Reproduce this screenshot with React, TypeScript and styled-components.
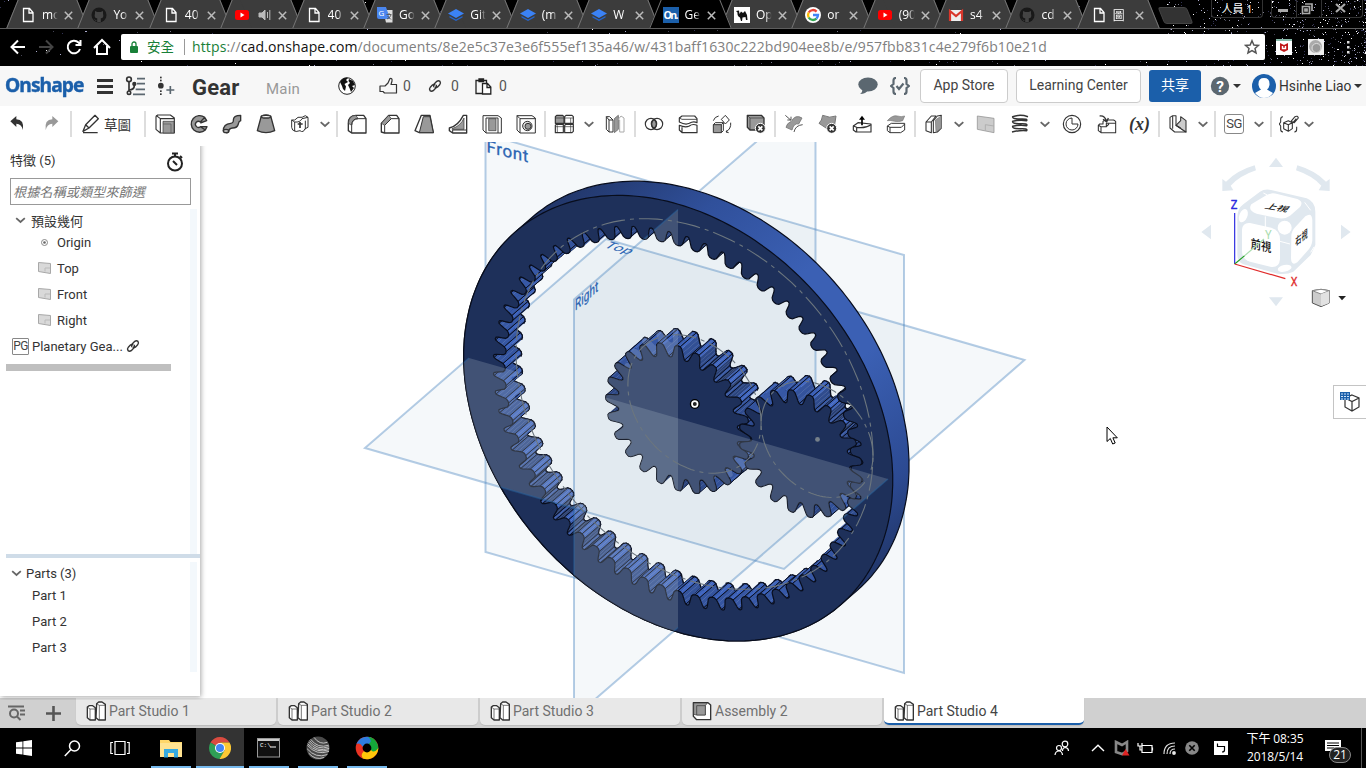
import React from "react";
import styled, { createGlobalStyle, css } from "styled-components";

const ui = `Roboto, "Noto Sans CJK TC", sans-serif`;
const sys = `"Open Sans", "Noto Sans CJK TC", sans-serif`;

const Global = createGlobalStyle`
  * { box-sizing: border-box; }
  body { margin: 0; background: #fff; overflow: hidden; font-family: ${ui}; }
  svg { display: block; flex: none; }
`;

const Screen = styled.div`
  width: 1366px;
  height: 768px;
  display: flex;
  flex-direction: column;
  overflow: hidden;
`;

/* ---------- browser chrome ---------- */

const Browser = styled.div`
  position: relative;
  height: 66px;
  flex: none;
  background: #000;
  color: #fff;
  font-family: ${sys};
  overflow: hidden;
`;
const StarLayer = styled.svg`
  position: absolute;
  inset: 0;
`;
const TabStrip = styled.div`
  position: relative;
  height: 29px;
  display: flex;
  padding-left: 12px;
  border-bottom: 1px solid #5d5d5d;
`;
const tabSide = css`
  content: "";
  position: absolute;
  top: 0;
  height: 28px;
  z-index: -1;
`;
const BrowserTab = styled.div<{ $active?: boolean }>`
  position: relative;
  z-index: ${(p) => (p.$active ? 2 : 1)};
  width: 71.4px;
  height: 28px;
  flex: none;
  display: flex;
  align-items: center;
  padding: 2px 0 0 8px;
  isolation: isolate;
  &::before {
    ${tabSide}
    left: 0;
    right: 30px;
    background: ${(p) => (p.$active ? "#000" : "#3c3c3c")};
    border-left: 1px solid #777;
    transform: skewX(-22deg);
  }
  &::after {
    ${tabSide}
    left: 20px;
    right: 0;
    background: ${(p) => (p.$active ? "#000" : "#3c3c3c")};
    border-right: 1px solid #777;
    transform: skewX(22deg);
  }
`;
const Fav = styled.div`
  width: 17px;
  height: 16px;
  flex: none;
`;
const TabTitle = styled.div`
  width: 21px;
  margin: 0 0 0 5px;
  padding-bottom: 1px;
  font-size: 12px;
  white-space: nowrap;
  overflow: hidden;
  -webkit-mask-image: linear-gradient(90deg, #000 45%, transparent 75%);
  mask-image: linear-gradient(90deg, #000 45%, transparent 75%);
`;
const NewTab = styled.div`
  width: 29px;
  height: 17px;
  margin: 7px 0 0 7px;
  border: 1px solid #444;
  border-radius: 3px;
  background: #333;
  transform: skewX(22deg);
`;
const WindowControls = styled.div`
  position: absolute;
  top: 0;
  right: 3px;
  display: flex;
  gap: 8px;
`;
const Profile = styled.div`
  width: 52px;
  height: 18px;
  border: 1px solid #333;
  border-top: 0;
  border-radius: 0 0 4px 4px;
  text-align: center;
  font-size: 11px;
  line-height: 18px;
`;
const WinButtons = styled.div`
  display: flex;
  height: 18px;
  border: 1px solid #333;
  border-top: 0;
  border-radius: 0 0 4px 4px;
  width: 92px;
`;
const AddressRow = styled.div`
  position: relative;
  height: 36px;
  display: flex;
  align-items: center;
`;
const NavIcons = styled.div`
  width: 121px;
  display: flex;
  gap: 10px;
  padding-left: 9px;
`;
const Omnibox = styled.div`
  width: 1144px;
  height: 26px;
  border-radius: 2px;
  background: #fff;
  display: flex;
  align-items: center;
  padding: 0 5px 0 8px;
  font-size: 14px;
  color: #808080;
`;
const Secure = styled.div`
  width: 37px;
  margin-left: 8px;
  color: #188038;
  font-size: 13.5px;
  line-height: 20px;
  white-space: nowrap;
`;
const Bar = styled.div`
  width: 1px;
  height: 16px;
  background: #999;
  margin: 0 7px 0 0;
`;
const Url = styled.div`
  flex: 1;
  font-size: 14px;
  letter-spacing: 0.125px;
  padding-bottom: 2px;
  white-space: nowrap;
  i { font-style: normal; color: #188038; }
  b { font-weight: 400; color: #111; }
`;
const Extensions = styled.div`
  display: flex;
  gap: 16px;
  padding-left: 11px;
  align-items: center;
`;

/* ---------- document header ---------- */

const DocHeader = styled.div`
  height: 40px;
  flex: none;
  background: #f7f7f7;
  display: flex;
  align-items: center;
  color: #333;
  font-size: 14px;
`;
const Brand = styled.div`
  width: 91px;
  padding: 0 0 3px 5px;
  font: 700 20px/24px "Noto Sans", sans-serif;
  letter-spacing: -1px;
  color: #1b5faa;
  -webkit-text-stroke: 0.4px #1b5faa;
  span { display: inline-block; transform: scaleX(0.965); transform-origin: 0 50%; }
`;
const HeaderSlot = styled.div<{ $w: number }>`
  width: ${(p) => p.$w}px;
  flex: none;
  display: flex;
  align-items: center;
  justify-content: center;
`;
const DocName = styled.div`
  width: 68px;
  margin-left: 9px;
  font-size: 22px;
  padding-top: 2px;
  font-weight: 700;
  letter-spacing: 0.2px;
`;
const Branch = styled.div`
  width: 66px;
  margin-left: 6px;
  padding-top: 6px;
  font-size: 15px;
  color: #999;
  letter-spacing: 0.2px;
`;
const Counter = styled.div<{ $w: number; $gap?: number }>`
  width: ${(p) => p.$w}px;
  display: flex;
  align-items: center;
  gap: ${(p) => p.$gap ?? 6}px;
  color: #555;
`;
const OutlineButton = styled.div<{ $w: number }>`
  width: ${(p) => p.$w}px;
  height: 34px;
  margin-right: 8px;
  border: 1px solid #ccc;
  border-radius: 4px;
  background: #fff;
  text-align: center;
  line-height: 31px;
  color: #444;
`;
const ShareButton = styled.div`
  width: 52px;
  height: 32px;
  margin: 0 9px 0 0;
  border-radius: 3px;
  background: #1b5faa;
  color: #fff;
  text-align: center;
  line-height: 31px;
`;
const Caret = styled.div`
  border: 4px solid transparent;
  border-top-color: #333;
  border-bottom: 0;
`;
const User = styled.div`
  display: flex;
  align-items: center;
  gap: 3px;
  margin-left: 8px;
  font-size: 13.8px;
  white-space: nowrap;
`;

/* ---------- tool bar ---------- */

const ToolBar = styled.div`
  height: 36px;
  flex: none;
  background: #fff;
  display: flex;
  align-items: center;
`;
const ToolCell = styled.div<{ $w: number }>`
  width: ${(p) => p.$w}px;
  height: 26px;
  flex: none;
  display: flex;
  align-items: center;
  justify-content: center;
  color: #333;
`;
const Rule = styled.div`
  width: 2px;
  height: 26px;
  background: #ddd;
`;
const SketchLabel = styled.span`
  margin: 0 4px 0 3px;
  font-size: 13.5px;
`;
const BoxedLetters = styled.div<{ $small?: boolean }>`
  width: ${(p) => (p.$small ? 17 : 20)}px;
  height: ${(p) => (p.$small ? 17 : 20)}px;
  border: 1px solid #888;
  border-radius: ${(p) => (p.$small ? 1 : 3)}px;
  font-size: ${(p) => (p.$small ? 12 : 13)}px;
  line-height: ${(p) => (p.$small ? 15 : 18)}px;
  text-align: center;
  color: #444;
  letter-spacing: -0.5px;
`;
const Variable = styled.div`
  font: italic 700 18px/20px "Liberation Serif", serif;
`;

/* ---------- work area ---------- */

const Work = styled.div`
  height: 556px;
  flex: none;
  display: flex;
  position: relative;
`;
const Side = styled.div`
  width: 200px;
  height: 554px;
  flex: none;
  background: #fff;
  box-shadow: 1px 1px 5px rgba(0, 0, 0, 0.35);
  clip-path: inset(4px -8px -4px 0);
  z-index: 1;
  display: flex;
  flex-direction: column;
  font-size: 13px;
  color: #333;
`;
const SideTitle = styled.div`
  height: 36px;
  display: flex;
  justify-content: space-between;
  align-items: center;
  padding: 4px 16px 0 10px;
  span { margin-bottom: 6px; }
`;
const Filter = styled.div`
  width: 181px;
  height: 27px;
  margin-left: 10px;
  border: 1px solid #999;
  font-size: 13.2px;
  line-height: 27px;
  font-style: italic;
  color: #777;
  padding-left: 2px;
`;
const ScrollPane = styled.div<{ $h: number; $mt: number }>`
  height: ${(p) => p.$h}px;
  margin-top: ${(p) => p.$mt}px;
  width: 197px;
  border-right: 7px solid #f3f8fc;
`;
const Row = styled.div<{ $pad: number; $h: number; $gap?: number; $after?: number }>`
  height: ${(p) => p.$h}px;
  margin-bottom: ${(p) => p.$after ?? 0}px;
  display: flex;
  align-items: center;
  gap: ${(p) => p.$gap ?? 6}px;
  padding-left: ${(p) => p.$pad}px;
  white-space: nowrap;
`;
const Rollback = styled.div`
  width: 165px;
  height: 7px;
  margin: 5px 0 0 6px;
  background: #bfbfbf;
`;
const Divider = styled.div`
  height: 4px;
  margin-left: 6px;
  background: #cfdce8;
`;
const Canvas = styled.div`
  position: relative;
  flex: 1;
`;
const CubeOverlay = styled.svg`
  position: absolute;
  top: 3px;
  right: 0;
`;
const TableButton = styled.div`
  position: absolute;
  right: 0;
  top: 243px;
  width: 33px;
  height: 34px;
  border: 1px solid #c4c4c4;
  border-right: 0;
  background: #fff;
  padding: 5px 0 0 5px;
`;
const Pointer = styled.svg`
  position: absolute;
  left: 906px;
  top: 284px;
`;

/* ---------- bottom tabs and task bar ---------- */

const DocTabs = styled.div`
  height: 30px;
  flex: none;
  background: #d0d0d0;
  display: flex;
`;
const DocTab = styled.div<{ $active?: boolean }>`
  width: 200px;
  height: 27px;
  margin-right: 2px;
  flex: none;
  border-radius: 0 0 5px 5px;
  background: ${(p) => (p.$active ? "#fff" : "#e8e8e8")};
  color: ${(p) => (p.$active ? "#444" : "#707070")};
  border-bottom: ${(p) => (p.$active ? "2px solid #1b5faa" : "0")};
  box-shadow: 0 1px 1px #bbb;
  display: flex;
  padding: 3px 0 0 10px;
  gap: 3px;
  font-size: 14px;
  line-height: 21px;
`;
const TaskBar = styled.div`
  height: 40px;
  flex: none;
  background: #000;
  display: flex;
  color: #fff;
  font-family: ${sys};
`;
const TaskCell = styled.div<{ $w: number; $open?: boolean; $hot?: boolean }>`
  width: ${(p) => p.$w}px;
  height: 40px;
  flex: none;
  display: flex;
  align-items: center;
  justify-content: center;
  background: ${(p) => (p.$hot ? "#333" : "none")};
  position: relative;
  &::after {
    content: "";
    position: absolute;
    bottom: 0;
    left: ${(p) => (p.$hot ? 0 : 5)}px;
    width: ${(p) => (p.$hot ? 48 : 40)}px;
    height: 2px;
    background: ${(p) => (p.$open ? "#76b9ed" : "none")};
  }
`;
const Spring = styled.div`
  flex: 1;
`;
const Clock = styled.div`
  width: 74px;
  font-size: 12px;
  line-height: 18px;
  padding-top: 2px;
  text-align: center;
  letter-spacing: -0.1px;
  white-space: nowrap;
`;
const Notice = styled.div`
  position: relative;
  width: 50px;
  height: 40px;
  border-right: 1px solid #555;
  margin-right: 4px;
  padding: 12px 0 0 13px;
`;
const Badge = styled.div`
  position: absolute;
  left: 17px;
  top: 19px;
  width: 22px;
  height: 16px;
  border: 1px solid #888;
  border-radius: 8px;
  background: #222;
  font-size: 12px;
  line-height: 14px;
  text-align: center;
`;

/* ---------- small drawings ---------- */

function seeded(seed: number) {
  let s = seed;
  return () => {
    s = (s * 16807) % 2147483647;
    return s / 2147483647;
  };
}
const rnd = seeded(77);
const stars = Array.from({ length: 900 }, () => {
  const dense = rnd() > 0.45;
  return {
    x: Math.floor(dense ? 1366 - Math.pow(rnd(), 1.5) * 200 : rnd() * 1366),
    y: Math.floor(rnd() * 66),
    c: ["#445", "#778", "#aac", "#fff", "#335"][Math.floor(rnd() * 5)],
  };
});

function Stars() {
  return (
    <StarLayer width={1366} height={66} shapeRendering="crispEdges">
      {stars.map((s, i) => (
        <rect key={i} x={s.x} y={s.y} width={1} height={1} fill={s.c} />
      ))}
    </StarLayer>
  );
}

const favs: Record<string, React.ReactNode> = {
  doc: <path d="M3.5 1.5H9.5L13 5.5V14.5H3.5ZM9 2V6H13" fill="none" stroke="#fff" strokeWidth="1.3" />,
  git: (
    <g>
      <circle cx="8" cy="8" r="7.5" fill="#191919" />
      <path d="M4 4L6.3 5H9.7L12 4V6.5Q13.3 11 9.8 11.3V15H6.2V11.3Q2.7 11 4 6.5ZM6 14Q4 14.5 3 12" fill="#444" />
    </g>
  ),
  yt: (
    <g>
      <rect x="1" y="3" width="14" height="10" rx="2.5" fill="#f00" />
      <path d="M6.5 5.5L10.5 8L6.5 10.5Z" fill="#fff" />
    </g>
  ),
  tr: (
    <g>
      <path d="M6 3H15.5V15.5H9Z" fill="#ddd" />
      <path d="M0 0H9L13 12H2Q0 12 0 10Z" fill="#4a86ee" />
      <text x="1.5" y="9" fontSize="8" fill="#fff">G</text>
      <path d="M9.5 7.5H14.5M12 6V8M10 12Q13 11 14 8M10.5 9L14 12.5" stroke="#555" fill="none" strokeWidth=".9" />
    </g>
  ),
  box: (
    <g>
      <path d="M0 6.5L8 2L16 6.5L8 11Z" fill="#3b82f6" />
      <path d="M1.5 9L8 12.4L14.5 9V10.5L8 14L1.5 10.5Z" fill="#2563c9" />
    </g>
  ),
  on: (
    <g>
      <rect width="16" height="16" fill="#1b5faa" />
      <text x="0.5" y="12" fontSize="10.5" fontWeight="700" fill="#fff" textLength="15">On.</text>
    </g>
  ),
  camel: (
    <g>
      <rect width="16" height="16" fill="#fff" />
      <path d="M2 4L5 3.5L5.5 7L7 4.5L9 6L11 4L13 8L13.5 13H12L11.5 10L8.5 10.5L8 14H7L6 10.5Q3 9 3.5 5.5Z" fill="#111" />
    </g>
  ),
  goo: (
    <g fill="none" strokeWidth="2.4">
      <circle cx="8" cy="8" r="8" fill="#fff" stroke="none" />
      <path d="M11.6 4.6A5 5 0 0 0 3.7 5.5" stroke="#ea4335" />
      <path d="M3.7 5.5A5 5 0 0 0 3.7 10.5" stroke="#fbbc05" />
      <path d="M3.7 10.5A5 5 0 0 0 11.4 11.6" stroke="#34a853" />
      <path d="M11.4 11.6A5 5 0 0 0 13 8H8" stroke="#4285f4" />
    </g>
  ),
  gm: (
    <g>
      <rect x="1" y="3" width="14" height="11" fill="#eee" />
      <path d="M2 14V4L8 9L14 4V14" fill="none" stroke="#d9362b" strokeWidth="2.2" />
    </g>
  ),
};

const browserTabs: [string, string, boolean?][] = [
  ["doc", "mo"], ["git", "Yo"], ["doc", "40"], ["yt", ""], ["doc", "40"], ["tr", "Go"], ["box", "Git"], ["box", "(m"],
  ["box", "W"], ["on", "Ge", true], ["camel", "Op"], ["goo", "or"], ["yt", "(90"], ["gm", "s4"], ["git", "cd"], ["doc", "圖"],
];

function Cross({ size = 11, color = "#bbb" }: { size?: number; color?: string }) {
  return (
    <svg width={size} height={size} viewBox="0 0 11 11">
      <path d="M1.8 1.8L9.2 9.2M9.2 1.8L1.8 9.2" stroke={color} strokeWidth="1.5" />
    </svg>
  );
}

function Ico({ children, size = 20, sw = 4 }: { children: React.ReactNode; size?: number; sw?: number }) {
  return (
    <svg width={size} height={size} viewBox="0 0 60 60" fill="none" stroke="#333" strokeWidth={sw} strokeLinejoin="round">
      {children}
    </svg>
  );
}

const Chevron = ({ size = 10 }: { size?: number }) => (
  <svg width={size} height={7} viewBox="0 0 10 7">
    <path d="M0.7 1.2L5 5L9.3 1.2" fill="none" stroke="#666" strokeWidth="1.8" />
  </svg>
);

const g = "#999";
const tools: Record<string, React.ReactNode> = {
  undo: <path d="M4 24L22 8V18Q46 18 42 50Q38 32 22 31V41Z" fill="#333" stroke="none" transform="translate(6 -2)" />,
  redo: <path d="M56 24L38 8V18Q14 18 18 50Q22 32 38 31V41Z" fill="#999" stroke="none" transform="translate(-4 -2)" />,
  extrude: (
    <g>
      <path d="M8 3H46L58 12V57H16L3 46V8ZM3 4L16 14V57M16 14H58" strokeWidth="3.4" />
      <path d="M24 22H57V57H24Z" fill={g} strokeWidth="2" />
      <path d="M24 30H48V57" stroke="#555" strokeWidth="2" />
    </g>
  ),
  revolve: (
    <path d="M50 10A25 25 0 1 0 52 48L37 38A9 9 0 1 1 37 24ZM50 10L56 20L37 27M37 38L57 38L52 48" fill={g} />
  ),
  sweep: (
    <g>
      <path d="M4 50Q4 30 26 28Q35 27 34 18Q34 4 56 4V20Q50 22 49 30Q46 42 32 42Q20 43 20 54Q12 60 4 50Z" fill={g} />
      <ellipse cx="12" cy="51" rx="8" ry="5" fill="#bbb" />
    </g>
  ),
  loft: (
    <g>
      <path d="M16 6L4 50Q30 62 56 50L44 6Q30 0 16 6Z" fill={g} />
      <ellipse cx="30" cy="8" rx="14" ry="4" fill="#fff" />
    </g>
  ),
  thicken: (
    <g strokeWidth="3">
      <path d="M5 18Q14 22 24 10Q38 12 46 5L54 10V40Q44 42 40 52Q34 54 30 50Q18 56 8 48L5 40ZM5 18L14 24Q30 26 36 14L54 10M14 24V52M46 20V46" />
      <path d="M30 42V24M23 30H38" strokeWidth="5" />
    </g>
  ),
  fillet: (
    <g>
      <path d="M4 28Q4 4 28 4H50L57 14V57H14L4 50Z" fill="#fff" />
      <path d="M4 28Q6 5 26 4L34 14Q16 14 14 34Z" fill={g} strokeWidth="2" />
      <path d="M14 57V34Q14 14 34 14H57" strokeWidth="3" />
    </g>
  ),
  chamfer: (
    <g>
      <path d="M4 54V28L26 4H50L57 14V57H14Z" />
      <path d="M4 28L26 4L34 14L14 34Z" fill={g} strokeWidth="2" />
      <path d="M14 57V34L34 14H57" strokeWidth="3" />
    </g>
  ),
  draft: (
    <g>
      <path d="M22 4H48L58 56H16L3 50Z" fill="#fff" />
      <path d="M28 8H48L58 56H16Z" fill={g} strokeWidth="3" />
    </g>
  ),
  rib: (
    <g>
      <path d="M46 4L56 4V57H14L4 50V42Q30 36 46 4Z" fill="#fff" />
      <path d="M12 44Q38 36 48 12V46H12Z" fill={g} strokeWidth="2" />
      <path d="M14 48V57M14 48H56" strokeWidth="3" />
    </g>
  ),
  shell: (
    <g>
      <path d="M3 5H48L58 12V57H12L3 48ZM12 12H48V57M12 12V57" strokeWidth="3" />
      <path d="M20 14H42V50H20Z" fill={g} strokeWidth="2" />
    </g>
  ),
  hole: (
    <g>
      <path d="M3 5H48L58 12V57H12L3 48ZM12 14H58M12 14V57M3 5L12 14" strokeWidth="3" />
      <circle cx="34" cy="36" r="14" fill="#ddd" strokeWidth="3" />
      <circle cx="36" cy="37" r="9" fill={g} strokeWidth="3" />
    </g>
  ),
  pattern: (
    <g strokeWidth="3.5">
      <path d="M4 8L8 4H26L30 8V28H4Z" fill={g} />
      <path d="M32 8L36 4H54L58 8V28H32ZM4 34L8 31H28V56H4ZM32 34L36 31H58V52L54 56H32Z" />
      <path d="M4 12H58M10 34V54M4 38H58M50 12V56" strokeWidth="2" />
    </g>
  ),
  mirror: (
    <g strokeWidth="3">
      <path d="M4 8H14L24 18V54H12L4 46ZM12 18V54M4 8L12 18H24" />
      <path d="M28 14L40 4V46L28 56Z" fill={g} stroke="#777" />
      <path d="M40 16L48 6L57 12V54H44V18Z" stroke="#aaa" />
    </g>
  ),
  boolean: (
    <g>
      <path d="M30 16A17 17 0 0 1 30 44A17 17 0 0 1 30 16Z" fill={g} />
      <circle cx="21" cy="30" r="17" strokeWidth="3.5" />
      <circle cx="39" cy="30" r="17" strokeWidth="3.5" />
    </g>
  ),
  split: (
    <g strokeWidth="3.5">
      <path d="M4 12L12 6H50L57 14V26Q46 20 34 28Q22 34 4 24Z" />
      <path d="M4 12L12 16H57" strokeWidth="2.5" />
      <path d="M4 34Q22 42 34 36Q44 28 57 34V56H12L4 48ZM12 40V56" />
    </g>
  ),
  transform: (
    <g strokeWidth="3">
      <path d="M4 32H28V56H4Z" fill={g} />
      <path d="M4 32L10 26H34L28 32M34 26V50L28 56" />
      <path d="M28 16L40 4L52 18L40 30ZM56 26Q58 44 42 54M4 20Q8 8 20 6M46 48L42 54L50 56" />
    </g>
  ),
  delete: (
    <g>
      <path d="M4 4H46L54 12V48H12L4 40Z" fill={g} />
      <path d="M4 4L12 12H52M12 12V48" strokeWidth="2" />
      <circle cx="43" cy="43" r="15" fill="#333" stroke="#fff" strokeWidth="3" />
      <path d="M37 37L49 49M49 37L37 49" stroke="#fff" strokeWidth="5" />
    </g>
  ),
  modify: (
    <g strokeWidth="2.5">
      <path d="M22 22Q34 0 54 12L44 30Q30 26 24 48L6 40Q8 28 22 22Z" fill={g} stroke="#777" />
      <path d="M30 54Q34 34 56 32M4 4L20 18M10 18H21V8" />
    </g>
  ),
  deleteFace: (
    <g>
      <path d="M14 4Q36 14 54 6L50 32L30 46L3 28Q12 20 14 4Z" fill={g} stroke="#777" strokeWidth="3" />
      <circle cx="41" cy="43" r="15" fill="#333" stroke="#fff" strokeWidth="3" />
      <path d="M35 37L47 49M47 37L35 49" stroke="#fff" strokeWidth="5" />
    </g>
  ),
  moveFace: (
    <g strokeWidth="3.5">
      <path d="M4 36L18 26L57 30V54H12L4 48Z" />
      <path d="M4 36L14 40Q40 44 57 32M14 40V54" />
      <path d="M30 34V10" strokeWidth="5" stroke="#000" />
      <path d="M21 17L30 5L39 17Z" fill="#000" stroke="none" />
    </g>
  ),
  replace: (
    <g strokeWidth="3.5">
      <path d="M4 20Q20 2 34 6Q46 10 56 6L50 20Q38 24 26 22Q14 18 4 20Z" fill={g} stroke="#777" strokeWidth="2" />
      <path d="M4 36L16 28H56V48L44 56H12L4 50ZM4 36L12 40H46L56 30M12 40V56" strokeWidth="3" />
    </g>
  ),
  offset: (
    <g strokeWidth="3.2">
      <path d="M6 24L22 6H36L22 24V56L6 50ZM6 24H22" fill="#fff" />
      <path d="M28 20L40 6L52 4V42L40 54L28 56Z" fill="#fff" />
      <path d="M34 18L52 6V42L36 54Z" fill={g} stroke="#777" strokeWidth="2" />
    </g>
  ),
  plane: (
    <g>
      <path d="M4 6L54 13V56L4 46Z" fill="#ccc" stroke="#999" strokeWidth="2.5" />
      <path d="M28 32V50M28 32L54 36" stroke="#aaa" strokeWidth="2.5" />
    </g>
  ),
  helix: (
    <path d="M54 8Q30 0 8 8Q6 15 32 15Q54 14 50 20Q30 16 8 22Q6 30 32 29Q54 28 50 35Q30 31 8 37Q6 45 32 44Q54 43 50 50Q30 48 6 54" strokeWidth="4.5" />
  ),
  clock: (
    <g strokeWidth="3.5">
      <circle cx="30" cy="30" r="26" />
      <path d="M30 12A18 18 0 1 0 48 30H30Z" strokeWidth="3" />
    </g>
  ),
  derive: (
    <g strokeWidth="3.2">
      <path d="M4 34L8 30H18V22L24 18H50L56 22V56H12L4 50ZM4 34L12 38H28V28H56M12 38V56M28 38L36 30" />
      <path d="M8 6Q24 4 28 22M18 16L29 24L34 12" strokeWidth="4" />
    </g>
  ),
  frame: (
    <g strokeWidth="3.2">
      <path d="M6 10L14 5H24V34L54 54H20L6 42Z" fill="#fff" />
      <path d="M24 34L38 20V8L54 20V54Z" fill="#ccc" />
      <path d="M14 6V44M24 34L38 42" />
    </g>
  ),
  fs: (
    <g strokeWidth="3.2">
      <path d="M12 8Q5 8 5 16V24L1 30L5 36V46Q5 54 12 54M46 54Q53 54 53 46V38" />
      <path d="M14 26L28 20L40 26V44L28 52L14 44ZM14 26L28 32L40 26M28 32V52" />
      <path d="M36 22L48 8Q56 4 58 12L46 26ZM40 28L52 14" />
    </g>
  ),
};

type ToolItem = [string, number];
const toolRow: ToolItem[] = [
  ["undo", 34], ["redo", 34], ["|", 6], ["sketch", 68], ["|", 6], ["extrude", 33], ["revolve", 34], ["sweep", 34],
  ["loft", 34], ["thicken", 34], ["v", 16], ["|", 8], ["fillet", 32], ["chamfer", 34], ["draft", 34], ["rib", 34],
  ["shell", 34], ["hole", 33], ["|", 6], ["pattern", 32], ["v", 18], ["mirror", 34], ["|", 6], ["boolean", 32],
  ["split", 35], ["transform", 34], ["delete", 34], ["|", 4], ["modify", 34], ["deleteFace", 34], ["moveFace", 34],
  ["replace", 33], ["|", 5], ["offset", 34], ["v", 16], ["plane", 37], ["helix", 32], ["v", 18], ["clock", 36],
  ["derive", 33], ["x", 33], ["|", 6], ["frame", 32], ["v", 18], ["|", 6], ["SG", 32], ["v", 18], ["|", 6],
  ["fs", 29], ["v", 12],
];

function Tool({ kind }: { kind: string }) {
  if (kind === "|") return <Rule />;
  if (kind === "v") return <Chevron />;
  if (kind === "SG") return <BoxedLetters>SG</BoxedLetters>;
  if (kind === "x") return <Variable>(x)</Variable>;
  if (kind === "sketch")
    return (
      <>
        <Ico>
          <path d="M6 52L14 32L42 4L52 14L24 42L6 52ZM14 32L24 42M6 56H50" />
        </Ico>
        <SketchLabel>草圖</SketchLabel>
      </>
    );
  return <Ico>{tools[kind]}</Ico>;
}

/* ---------- gear model ---------- */

type P = [number, number];
const BACK: P = [694.5, 404];
const DEPTH: P = [-16.3, 14.2];
const toBack = ([a, b]: P): P => [BACK[0] + a * 209.5, BACK[1] + a * 60.5 - b * 209];
const toFront = (p: P): P => {
  const [x, y] = toBack(p);
  return [x + DEPTH[0], y + DEPTH[1]];
};
const MOD = 0.0266;
const U: P = [0.654, 0.757];

const outerShape: [number, number, boolean][] = [
  [-0.5, -1.25, false], [-0.4, -1.12, true], [-0.33, -0.7, false], [-0.26, 0, false], [-0.19, 0.7, false],
  [-0.11, 1, true], [0, 1.05, false], [0.11, 1, true], [0.19, 0.7, false], [0.26, 0, false], [0.33, -0.7, false],
  [0.4, -1.12, true],
];
const innerShape: [number, number, boolean][] = [
  [-0.5, -1.15, false], [-0.42, -1.05, true], [-0.36, -0.65, false], [-0.3, 0, false], [-0.24, 0.6, true],
  [-0.13, 0.92, false], [0, 1, true], [0.13, 0.92, false], [0.24, 0.6, true], [0.3, 0, false], [0.36, -0.65, false],
  [0.42, -1.05, true],
];

interface Vert { p: P; edge: boolean; lift: number }
function gear(cx: number, r: number, n: number, phase: number, inner: boolean): Vert[] {
  const out: Vert[] = [];
  const pitch = (Math.PI * 2) / n;
  for (let i = 0; i < n; i++)
    for (const [t, h, edge] of inner ? innerShape : outerShape) {
      const th = (i + phase + t) * pitch;
      const rad = r + (inner ? -h : h) * MOD;
      out.push({ p: [cx + rad * Math.cos(th), rad * Math.sin(th)], edge, lift: h });
    }
  return out;
}
const disc = (r: number): Vert[] =>
  Array.from({ length: 240 }, (_, i) => {
    const th = (i / 240) * Math.PI * 2;
    return { p: [r * Math.cos(th), r * Math.sin(th)] as P, edge: false, lift: 0 };
  });
const rim = disc(1.024);
const bore = gear(0, 0.852, 64, 0, true);
const sun = gear(0, 0.318, 24, 0, false);
const planet = gear(0.585, 0.267, 20, 0.5, false);

const str = (ps: P[]) => ps.map((p) => p[0].toFixed(1) + "," + p[1].toFixed(1)).join(" ");
const loop = (vs: Vert[], f: (p: P) => P) => "M" + str(vs.map((v) => f(v.p))) + "Z";

/* silhouette swept by the rim between its back and front face */
const rimHull = "M" + str(rim.map((v) => (v.p[0] * U[0] + v.p[1] * U[1] > 0 ? toBack(v.p) : toFront(v.p)))) + "Z";

interface Wall { key: number; pts: string; fill: string; back: string; ribs: string }
function walls(vs: Vert[], inner: boolean): Wall[] {
  const out: Wall[] = [];
  vs.forEach((v, i) => {
    const w = vs[(i + 1) % vs.length];
    const dx = w.p[0] - v.p[0];
    const dy = w.p[1] - v.p[1];
    const len = Math.hypot(dx, dy);
    const s = inner ? -1 : 1;
    const facing = (s * (dy * U[0] - dx * U[1])) / len;
    if (facing <= 0) return;
    const high = v.lift > 0.55 && w.lift > 0.55;
    const k = high ? 0.6 + 0.5 * facing : 0.3 + 0.6 * facing;
    const c = [60, 96, 180].map((x, j) => Math.min(255, Math.round(x * k + [14, 22, 40][j] * (1 - k))));
    const a = toFront(v.p), b = toFront(w.p), d = toBack(w.p), e = toBack(v.p);
    out.push({
      key: ((v.p[0] + w.p[0]) / 2) * U[0] + ((v.p[1] + w.p[1]) / 2) * U[1],
      pts: str([a, b, d, e]),
      fill: `rgb(${c.join(",")})`,
      back: "M" + str([e, d]),
      ribs: (v.edge ? "M" + str([a, e]) : "") + (w.edge ? "M" + str([b, d]) : ""),
    });
  });
  return out;
}
const toothWalls = [...walls(bore, true), ...walls(sun, false), ...walls(planet, false)].sort((a, b) => a.key - b.key);

const frontPlane = "485.500,134 904,255 904,673 485.500,552";
const topPlane = "365,448 606,239 1024.5,360 784,569";
const rightPlane = "574,299.5 815.5,90.5 815.5,508.5 574,717.5";
const topNear = "M469,358L365,448L784,569L888,479";
const rightNear = "M678,209.5L574,299.5V717.5L678,627.5";

function PitchCircle({ cx, r }: { cx: number; r: number }) {
  const ps = Array.from({ length: 121 }, (_, i) => {
    const th = (i / 120) * Math.PI * 2;
    return toBack([cx + r * Math.cos(th), r * Math.sin(th)]);
  });
  return <path d={"M" + str(ps)} fill="none" stroke="#6c767e" strokeWidth="1.1" strokeDasharray="24 5 4 5" />;
}

function Model() {
  return (
    <svg width={1166} height={556} viewBox="200 142 1166 556">
      <defs>
        <linearGradient id="rimShade" gradientUnits="userSpaceOnUse" x1="530" y1="220" x2="850" y2="615">
          <stop offset="0" stopColor="#22376a" />
          <stop offset=".2" stopColor="#30509b" />
          <stop offset=".42" stopColor="#3b60b4" />
          <stop offset=".62" stopColor="#3b60b4" />
          <stop offset=".85" stopColor="#2c4a92" />
          <stop offset="1" stopColor="#1f3260" />
        </linearGradient>
        <clipPath id="boreFront"><path d={loop(bore, toFront)} /></clipPath>
        <mask id="solid" maskUnits="userSpaceOnUse" x="200" y="142" width="1166" height="556">
          <path d={rimHull} fill="#fff" />
          <path d={loop(bore, toBack)} fill="#000" clipPath="url(#boreFront)" />
          {[sun, planet].map((s, i) => (
            <g key={i} fill="#fff">
              <path d={loop(s, toBack)} />
              <path d={loop(s, toFront)} />
            </g>
          ))}
        </mask>
      </defs>
      <g fill="rgba(60,110,165,0.05)" stroke="rgba(70,130,190,0.4)" strokeWidth="2">
        <polygon points={frontPlane} />
        <polygon points={topPlane} />
        <polygon points={rightPlane} />
      </g>
      <g fill="#2c65b3" fontFamily="Roboto, sans-serif" stroke="#2c65b3" strokeWidth=".3">
        <text transform="matrix(1 .25 0 1 486.500 152)" fontSize="17" letterSpacing="0.6">Front</text>
        <text transform="matrix(.96 .28 -.7 .5 603 247)" fontSize="15.500" letterSpacing="0.4" stroke="none">Top</text>
        <text transform="matrix(.64 -.56 0 1 575 311)" fontSize="15.500" letterSpacing="0.2">Right</text>
      </g>
      <path d={rimHull + loop(disc(0.9), toFront)} fill="url(#rimShade)" fillRule="evenodd" />
      <path d={rimHull} fill="none" stroke="#080d1c" strokeWidth="1.2" />
      {toothWalls.map((w, i) => (
        <g key={i}>
          <polygon points={w.pts} fill={w.fill} stroke={w.fill} strokeWidth=".3" />
          <path d={w.back} stroke="#0a0f20" strokeWidth="1.4" strokeLinecap="round" />
          {w.ribs && <path d={w.ribs} stroke="#0a0f20" strokeWidth="1" />}
        </g>
      ))}
      <g fill="#1e305a" stroke="#080d1c" strokeWidth="1.2" fillRule="evenodd">
        <path d={loop(rim, toFront) + loop(bore, toFront)} />
        <path d={loop(sun, toFront)} />
        <path d={loop(planet, toFront)} />
      </g>
      <g mask="url(#solid)">
        <polygon points="365,448 469,358 888,479 784,569" fill="rgba(193,203,215,.22)" />
        <polygon points="574,299.5 678,209.5 678,627.5 574,717.5" fill="rgba(193,203,215,.22)" />
        <path d={topNear} fill="none" stroke="rgba(40,100,160,.5)" strokeWidth="1.6" />
        <path d={rightNear} fill="none" stroke="rgba(40,100,160,.5)" strokeWidth="1.6" />
      </g>
      <PitchCircle cx={0} r={0.852} />
      <PitchCircle cx={0} r={0.318} />
      <PitchCircle cx={0.585} r={0.267} />
      <circle cx="694.8" cy="404" r="3" fill="#222" stroke="#000" strokeWidth="4" />
      <circle cx="694.8" cy="404" r="2.8" fill="#222" stroke="#fff" strokeWidth="1.7" />
      <circle cx="817.5" cy="439.4" r="2.4" fill="#76808a" />
    </svg>
  );
}

function ViewCube() {
  return (
    <CubeOverlay width={176} height={170} viewBox="0 0 528 510">
      <g fill="#e0e8ef">
        <path d="M237 66L258 38L279 66ZM237 457H279L258 484ZM63 239V283L34 261ZM453 239L482 261L453 283Z" />
        <path d="M194 61L198 76Q150 92 122 122L130 136L97 138L97 102L108 110Q142 76 194 61Z" />
        <path d="M322 61L318 76Q366 92 394 122L386 136L419 138L419 102L408 110Q374 76 322 61Z" />
        <path d="M238 134L350 160Q376 170 376 200V300L362 330L310 380Q290 390 262 386L160 358Q142 350 142 330V220Q142 190 160 178L210 140Q222 132 238 134Z" />
      </g>
      <g fill="#fff">
        <path d="M184 178L230 150Q244 142 262 147L322 162Q342 170 330 186L300 212Q284 224 262 219L200 206Q172 196 184 178Z" />
        <path d="M180 234L244 248Q270 256 270 284V342Q268 368 244 366L180 350Q156 342 156 318V254Q158 232 180 234Z" />
        <path d="M304 274Q304 258 316 246L346 214Q366 200 367 226V286Q366 304 352 318L322 352Q304 364 303 340Z" />
        <ellipse cx="160" cy="212" rx="12" ry="21" transform="rotate(22 160 212)" />
        <circle cx="284" cy="248" r="21" />
        <ellipse cx="284" cy="370" rx="21" ry="10" transform="rotate(-12 284 370)" />
      </g>
      <path d="M226 214V246M270 289L300 297M344 172L362 196M220 144L232 150M372 306L362 322" stroke="#fff" strokeWidth="3" />
      <g fill="#111" fontFamily='"Noto Sans CJK TC", sans-serif' fontWeight="500">
        <text transform="matrix(1 .16 -.5 .6 222 190)" fontSize="34">上視</text>
        <text transform="matrix(1 .22 0 1.2 182 308)" fontSize="31">前視</text>
        <text transform="matrix(.64 -.5 0 1.15 316 304)" fontSize="29">右視</text>
      </g>
      <path d="M134 357V204" stroke="#2a2ae0" strokeWidth="3.5" />
      <path d="M134 357L164 332" stroke="#1fa01f" strokeWidth="3.5" />
      <path d="M164 332L222 282" stroke="#a9dcae" strokeWidth="3.5" />
      <path d="M134 357L286 401" stroke="#e02c2c" strokeWidth="3.5" />
      <g fontFamily="Roboto, sans-serif" fontSize="40">
        <text x="122" y="193" fill="#2a2ae0" stroke="#2a2ae0" textLength="20" lengthAdjust="spacingAndGlyphs">Z</text>
        <text x="225" y="281" fill="#a9dcae" textLength="20" lengthAdjust="spacingAndGlyphs">Y</text>
        <text x="302" y="423" fill="#e02c2c" stroke="#e02c2c" textLength="20" lengthAdjust="spacingAndGlyphs">X</text>
      </g>
      <g stroke="#555" strokeWidth="3" strokeLinejoin="round">
        <path d="M367 437L393 433L418 437V474L393 485L367 474Z" fill="#ccc" />
        <path d="M367 437L393 433L418 437L393 447Z" fill="#fff" stroke="#888" />
        <path d="M393 447V484L418 474V438Z" fill="#e2e2e2" stroke="none" />
      </g>
      <path d="M445 453H468L456 466Z" fill="#222" />
    </CubeOverlay>
  );
}

const PlaneIcon = () => (
  <svg width="14" height="14" viewBox="0 0 14 14">
    <path d="M0.5 1.5L12.5 2.5V12.5L0.5 10.5Z" fill="#d9d9d9" stroke="#a8a8a8" />
    <path d="M7 7V10.500M7 7H12" fill="none" stroke="#bbb" />
  </svg>
);
const LinkIcon = ({ size = 14 }: { size?: number }) => (
  <svg width={size} height={size} viewBox="0 0 24 24" fill="none" stroke="#333" strokeWidth="2.4">
    <path d="M10 14Q8 11 11 8L15 4Q18 2 20.5 4Q22.500 7 20 10L16.500 13.500Q14 15.500 11.500 13.500" />
    <path d="M14 10Q16 13 13 16L9 20Q6 22 3.500 20Q1.500 17 4 14L7.500 10.500Q10 8.500 12.500 10.500" />
  </svg>
);
const StudioIcon = () => (
  <svg width="20" height="20" viewBox="0 0 60 60" fill="#fff" stroke="#333" strokeWidth="4" strokeLinejoin="round">
    <path d="M4 18L10 14H20L28 20V57H12L4 50Z" />
    <path d="M4 18L12 24H28M12 24V57" strokeWidth="2" fill="none" />
    <path d="M32 8L38 3H48L58 10V57H38L30 50Z" />
    <path d="M31 8L40 13H58M40 13V57" strokeWidth="2" fill="none" />
  </svg>
);
const AssemblyIcon = () => (
  <svg width="20" height="20" viewBox="0 0 60 60" fill="#fff" stroke="#333" strokeWidth="4" strokeLinejoin="round">
    <path d="M4 5H48L56 12V56H14L4 46Z" />
    <path d="M5 6H46L40 14V42H14L5 40Z" fill="#999" strokeWidth="2" />
    <path d="M14 14H40V42H14Z" fill="#999" strokeWidth="2" />
  </svg>
);

export default function App() {
  return (
    <Screen>
      <Global />
      <Browser>
        <Stars />
        <TabStrip>
          {browserTabs.map(([f, t, on], i) => (
            <BrowserTab key={i} $active={on}>
              <Fav>
                <svg width="16" height="16" viewBox="0 0 16 16">{favs[f]}</svg>
              </Fav>
              {i === 3 ? (
                <svg width="26" height="12" viewBox="0 0 26 12" fill="none" stroke="#bbb">
                  <path d="M8 4H11L14 1V11L11 8H8Z" fill="#bbb" />
                  <path d="M16.500 3V9M18.800 1V11" />
                </svg>
              ) : (
                <TabTitle>{t}</TabTitle>
              )}
              <Cross />
            </BrowserTab>
          ))}
          <NewTab />
          <WindowControls>
            <Profile>人員 1</Profile>
            <WinButtons>
              <svg width="90" height="18" viewBox="0 0 90 18" fill="none" stroke="#aaa">
                <path d="M6 10.500H16" strokeWidth="3" />
                <path d="M24.500 0V17M49.500 0V17" stroke="#333" />
                <path d="M33 4H40V11M30.500 6.500H37.500V13.500H30.500ZM33 9H35V11H33Z" strokeWidth="1.700" />
                <path d="M64 4L73 12M73 4L64 12" strokeWidth="2.200" />
              </svg>
            </WinButtons>
          </WindowControls>
        </TabStrip>
        <AddressRow>
          <NavIcons>
            <svg width="18" height="18" viewBox="0 0 18 18" fill="none" stroke="#fff" strokeWidth="2"><path d="M16 9H3M9 2.500L2.500 9L9 15.500" /></svg>
            <svg width="18" height="18" viewBox="0 0 18 18" fill="none" stroke="#444" strokeWidth="2"><path d="M2 9H15M9 2.500L15.500 9L9 15.500" /></svg>
            <svg width="18" height="18" viewBox="0 0 18 18" fill="none" stroke="#fff" strokeWidth="2"><path d="M15 11A6.300 6.300 0 1 1 13.500 4.500L15.500 6.500M15.500 2V7H10.500" /></svg>
            <svg width="18" height="18" viewBox="0 0 18 18" fill="none" stroke="#fff" strokeWidth="2"><path d="M1 10L9 2L17 10M4 8V16H14V8" /></svg>
          </NavIcons>
          <Omnibox>
            <svg width="10" height="13" viewBox="0 0 10 13"><rect x="1" y="5" width="8" height="7" rx="1" fill="#188038" /><path d="M3 5V3A2 2 0 0 1 7 3V5" fill="none" stroke="#188038" strokeWidth="1.300" /></svg>
            <Secure>安全</Secure>
            <Bar />
            <Url>
              <i>https</i>://<b>cad.onshape.com</b>/documents/8e2e5c37e3e6f555ef135a46/w/431baff1630c222bd904ee8b/e/957fbb831c4e279f6b10e21d
            </Url>
            <svg width="16" height="16" viewBox="0 0 24 24" fill="none" stroke="#555" strokeWidth="2.200"><path d="M12 2.500L14.800 9L21.800 9.600L16.500 14.200L18.100 21L12 17.400L5.900 21L7.500 14.200L2.200 9.600L9.200 9Z" /></svg>
          </Omnibox>
          <Extensions>
            <svg width="16" height="16" viewBox="0 0 16 16"><rect width="16" height="16" fill="#fff" /><rect width="16" height="2" fill="#8ba" /><path d="M4 4L8 6L12 4V11L8 13L4 11Z" fill="#c01818" /><path d="M6.500 7V9.500H9.500V7" fill="none" stroke="#fff" strokeWidth="1.400" /></svg>
            <svg width="16" height="16" viewBox="0 0 16 16"><rect width="16" height="16" fill="#eee" /><circle cx="7.500" cy="7.500" r="6.500" fill="#aaa" /><circle cx="8.500" cy="9" r="4.500" fill="#999" stroke="#ddd" /></svg>
            <svg width="16" height="16" viewBox="0 0 16 16" fill="#ddd"><rect x="7" y="2" width="2.500" height="2.500" /><rect x="7" y="7" width="2.500" height="2.500" /><rect x="7" y="12" width="2.500" height="2.500" /></svg>
          </Extensions>
        </AddressRow>
      </Browser>

      <DocHeader>
        <Brand><span>Onshape</span></Brand>
        <HeaderSlot $w={28}>
          <svg width="16" height="15" viewBox="0 0 16 15" fill="#333"><rect width="16" height="3" /><rect y="6" width="16" height="3" /><rect y="12" width="16" height="3" /></svg>
        </HeaderSlot>
        <HeaderSlot $w={32}>
          <svg width="20" height="20" viewBox="0 0 60 60" fill="none" stroke="#333" strokeWidth="5">
            <circle cx="12" cy="10" r="7" /><path d="M12 17V52M12 42Q28 42 28 28" /><circle cx="28" cy="24" r="4" fill="#333" /><circle cx="12" cy="50" r="5" fill="#fff" />
            <path d="M36 8H60M36 23H60M32 40H60M24 55H60" stroke="#5b6770" />
          </svg>
        </HeaderSlot>
        <HeaderSlot $w={32}>
          <svg width="18" height="20" viewBox="0 0 54 60" fill="#333"><rect x="6" y="2" width="5" height="5" /><rect x="6" y="11" width="5" height="5" /><circle cx="8.500" cy="29" r="8.500" /><rect x="6" y="43" width="5" height="5" /><rect x="6" y="52" width="5" height="5" /><path d="M37 30V54M25 42H49" stroke="#5b6770" strokeWidth="5" /></svg>
        </HeaderSlot>
        <DocName>Gear</DocName>
        <Branch>Main</Branch>
        <HeaderSlot $w={30}>
          <svg width="18" height="18" viewBox="0 0 18 18"><circle cx="9" cy="9" r="8.300" fill="#fff" stroke="#222" /><path d="M2 5Q5 0 10 1L8 3L10 5L6.500 7L8 9.500L7 14L5 12L4 9Z" fill="#111" /><path d="M11 2L15 4L17 8L14 9L16 11L13 15L11.500 11L10 8L12 6L10.500 4Z" fill="#111" /></svg>
        </HeaderSlot>
        <HeaderSlot $w={17} />
        <Counter $w={49} $gap={5}>
          <svg width="19" height="18" viewBox="0 0 19 18" fill="none" stroke="#333" strokeWidth="1.200"><path d="M1 9H6L9 6L11 1.500Q13.500 1 13 4L12 7.500H17.500V16H5.500L4 14.500H1Z" strokeLinejoin="round" /></svg>
          0
        </Counter>
        <Counter $w={47} $gap={9}><LinkIcon />0</Counter>
        <Counter $w={381} $gap={7}>
          <svg width="17" height="17" viewBox="0 0 17 17" fill="none" stroke="#222" strokeWidth="1.300"><path d="M7 15.500H1V2.500H11.500V5M4 1H8.500V3.500H4Z" /><path d="M7.500 5.500H12.500L15.800 9V16H7.500ZM12 6V9.500H15.500" fill="#fff" /></svg>
          0
        </Counter>
        <HeaderSlot $w={24}>
          <svg width="20" height="18" viewBox="0 0 20 18" fill="#5b6770"><ellipse cx="10" cy="7.500" rx="9.700" ry="7" /><path d="M4 12Q5 15 2 17Q8 17 10 13Z" /></svg>
        </HeaderSlot>
        <HeaderSlot $w={40}>
          <svg width="20" height="18" viewBox="0 0 20 18" fill="none" stroke="#5b6770" strokeWidth="2.200"><path d="M6 1Q3.500 1 3.500 3.500V7L1 9L3.500 11V14.500Q3.500 17 6 17M14 1Q16.500 1 16.500 3.500V7L19 9L16.500 11V14.500Q16.500 17 14 17M6.500 9L9 12L13.500 6.500" /></svg>
        </HeaderSlot>
        <OutlineButton $w={88}>App Store</OutlineButton>
        <OutlineButton $w={125}>Learning Center</OutlineButton>
        <ShareButton>共享</ShareButton>
        <svg width="20" height="20" viewBox="0 0 20 20"><circle cx="10" cy="10" r="9.200" fill="#5b6770" /><text x="10" y="15.500" textAnchor="middle" fontFamily="Roboto" fontWeight="700" fontSize="15.500" fill="#fff">?</text></svg>
        <HeaderSlot $w={14}><Caret /></HeaderSlot>
        <User>
          <svg width="24" height="24" viewBox="0 0 24 24"><circle cx="12" cy="12" r="12" fill="#1b5faa" /><path d="M12 4Q18 4 17.500 11Q17 14 15 15.500L21 19Q17 24 12 24Q7 24 3 19L9 15.500Q7 14 6.500 11Q6 4 12 4Z" fill="#fff" /></svg>
          Hsinhe Liao
          <Caret />
        </User>
      </DocHeader>

      <ToolBar>
        {toolRow.map(([k, w], i) => (
          <ToolCell key={i} $w={w}><Tool kind={k} /></ToolCell>
        ))}
      </ToolBar>

      <Work>
        <Side>
          <SideTitle>
            <span>特徵 (5)</span>
            <svg width="18" height="20" viewBox="0 0 18 20" fill="none" stroke="#222" strokeWidth="2"><circle cx="9" cy="11.500" r="7" /><path d="M6 1.500H12M9 2V5M14 4L16 6M7 9L11 13" /></svg>
          </SideTitle>
          <Filter>根據名稱或類型來篩選</Filter>
          <ScrollPane $h={345} $mt={4}>
            <Row $pad={15} $h={23} $gap={5}><Chevron size={11} />預設幾何</Row>
            <Row $pad={40} $h={21} $gap={8} $after={2}>
              <svg width="9" height="9" viewBox="0 0 9 9"><circle cx="4.500" cy="4.500" r="3" fill="none" stroke="#888" /><circle cx="4.500" cy="4.500" r="1.300" fill="#666" /></svg>
              Origin
            </Row>
            {["Top", "Front", "Right"].map((n) => (
              <Row key={n} $pad={38} $h={26} $gap={5}><PlaneIcon />{n}</Row>
            ))}
            <Row $pad={12} $h={26} $gap={3}>
              <BoxedLetters $small>PG</BoxedLetters>
              Planetary Gea... <LinkIcon />
            </Row>
            <Rollback />
          </ScrollPane>
          <Divider />
          <ScrollPane $h={110} $mt={4}>
            <Row $pad={11} $h={22} $gap={4}><Chevron size={11} />Parts (3)</Row>
            <Row $pad={32} $h={22}>Part 1</Row>
            <Row $pad={32} $h={30}>Part 2</Row>
            <Row $pad={32} $h={22}>Part 3</Row>
          </ScrollPane>
        </Side>
        <Canvas>
          <Model />
          <ViewCube />
          <TableButton>
            <svg width="21" height="22" viewBox="0 0 21 22">
              <path d="M13 4L20 7V16L13 20L6 16V7ZM6 7L13 10.500L20 7M13 10.500V20" fill="#fff" stroke="#333" strokeWidth="1.200" />
              <rect x="1" y="1" width="10" height="8" fill="#1b5faa" />
              <path d="M2 3H10M2 5.500H10M2 8H10" stroke="#cfe4fa" strokeDasharray="2 1" />
            </svg>
          </TableButton>
          <Pointer width="14" height="20" viewBox="0 0 14 20"><path d="M1 1V15.500L4.300 12.500L6.700 18L9.200 17L6.900 11.800H11.300Z" fill="#fff" stroke="#000" /></Pointer>
        </Canvas>
      </Work>

      <DocTabs>
        <HeaderSlot $w={33}>
          <svg width="17" height="16" viewBox="0 0 17 16" fill="none" stroke="#666" strokeWidth="2"><path d="M0 1.500H16M12 5.500H17M12 9.500H17" /><circle cx="6" cy="8.500" r="4" /><path d="M9 11.500L12.500 15" /></svg>
        </HeaderSlot>
        <HeaderSlot $w={40}>
          <svg width="15" height="15" viewBox="0 0 15 15"><path d="M7.500 0V15M0 7.500H15" stroke="#555" strokeWidth="2.600" /></svg>
        </HeaderSlot>
        <HeaderSlot $w={3} />
        <DocTab><StudioIcon />Part Studio 1</DocTab>
        <DocTab><StudioIcon />Part Studio 2</DocTab>
        <DocTab><StudioIcon />Part Studio 3</DocTab>
        <DocTab><AssemblyIcon />Assembly 2</DocTab>
        <DocTab $active><StudioIcon />Part Studio 4</DocTab>
      </DocTabs>

      <TaskBar>
        <TaskCell $w={48}><svg width="16" height="16" viewBox="0 0 16 16" fill="#fff"><path d="M0 2.300L6.500 1.400V7.500H0ZM7.300 1.300L16 0V7.500H7.300ZM0 8.500H6.500V14.600L0 13.700ZM7.300 8.500H16V16L7.300 14.700Z" /></svg></TaskCell>
        <TaskCell $w={48}><svg width="17" height="17" viewBox="0 0 17 17" fill="none" stroke="#fff" strokeWidth="1.500"><circle cx="10.500" cy="6" r="5" /><path d="M7 9.500L0.800 16" /></svg></TaskCell>
        <TaskCell $w={48}><svg width="20" height="16" viewBox="0 0 20 16" fill="none" stroke="#fff" strokeWidth="1.200"><path d="M5 1.500H15V14.500H5ZM3 2.500H.8V13.500H3M17 2.500H19.200V13.500H17" /></svg></TaskCell>
        <TaskCell $w={2} />
        <TaskCell $w={50} $open><svg width="22" height="19" viewBox="0 0 22 19"><path d="M0 1H9L10.500 3H22V17H0Z" fill="#ffd76a" /><path d="M0 4H22V18H0Z" fill="#ffe391" /><path d="M4 18.500V10H18V18.500H14V14H8V18.500Z" fill="#35a9e0" /></svg></TaskCell>
        <TaskCell $w={48} $open $hot>
          <svg width="22" height="22" viewBox="0 0 22 22">
            <path d="M11 11L1.500 5.500A11 11 0 0 1 20.500 5.500H11Z" fill="#d94b40" />
            <path d="M11 11L1.500 5.500A11 11 0 0 0 10.500 22L15.500 14Z" fill="#2f9f56" />
            <path d="M11 5.500H20.500A11 11 0 0 1 10.500 22L15.500 13.500Z" fill="#fcc934" />
            <circle cx="11" cy="11" r="5" fill="#fff" /><circle cx="11" cy="11" r="4" fill="#4285f4" />
          </svg>
        </TaskCell>
        <TaskCell $w={49} $open><svg width="23" height="20" viewBox="0 0 23 20"><rect x=".5" y=".5" width="22" height="18.500" fill="#111" stroke="#999" /><rect x="1" y="1" width="21" height="2" fill="#ccc" /><text x="3" y="9" fontSize="6" fontFamily="Liberation Mono" fill="#fff">C:\</text><path d="M13 9H19" stroke="#fff" /></svg></TaskCell>
        <TaskCell $w={49} $open>
          <svg width="24" height="24" viewBox="0 0 24 24" fill="none" stroke="#c4c4c4" strokeWidth=".9">
            <circle cx="12" cy="12" r="11.500" fill="#4a4a4a" stroke="none" />
            <g transform="rotate(12 12 12)">
              <path d="M3 5Q12 13 22 7M1.500 8Q12 17 23 10M1 11.500Q12 20 23.500 13M1.500 15Q12 23 22.500 16.500M4 19Q12 25 20 20M6 2.500Q13 9 20 4.500M2 6.500Q12 15 22.500 8.500M1 10Q12 18 23 11.500" />
            </g>
          </svg>
        </TaskCell>
        <TaskCell $w={49} $open>
          <svg width="24" height="24" viewBox="0 0 24 24">
            <circle cx="12" cy="12" r="11.300" fill="#ea3323" />
            <path d="M1.500 8A11.300 11.300 0 0 1 16 1.500Q19 5 16 9L7.500 10.500Q5 6 1.500 8Z" fill="#2f7de0" />
            <path d="M13 .8A11.300 11.300 0 0 1 23.200 13.500Q19 18 15.500 15L14 7.500Q18 5 13 .8Z" fill="#14a83a" />
            <path d="M23.300 12A11.300 11.300 0 0 1 8 22.500Q5 19 8.500 15.500L16 14Q19 18 23.300 12Z" fill="#ffc60a" />
            <circle cx="12" cy="12" r="4.400" fill="#000" />
          </svg>
        </TaskCell>
        <Spring />
        <TaskCell $w={30}><svg width="16" height="16" viewBox="0 0 16 16" fill="none" stroke="#fff" strokeWidth="1.200"><circle cx="11" cy="4" r="2.800" /><path d="M8.500 11Q8.500 7.500 11.500 7.500Q14.500 8 14.500 11" /><circle cx="5" cy="8" r="2.500" /><path d="M1 15Q1.500 11 5 11Q8 11 8.500 15" /></svg></TaskCell>
        <TaskCell $w={42}><svg width="14" height="8" viewBox="0 0 14 8"><path d="M1 7L7 1.200L13 7" fill="none" stroke="#fff" strokeWidth="1.400" /></svg></TaskCell>
        <TaskCell $w={6}><svg width="16" height="16" viewBox="0 0 16 16"><path d="M2 2L8 5L13 2V11L8 14L2 12Z" fill="none" stroke="#888" strokeWidth="2.600" /><path d="M11.500 9L15.500 15.500H8Z" fill="#e02424" /></svg></TaskCell>
        <TaskCell $w={40}><svg width="17" height="12" viewBox="0 0 17 12" fill="none" stroke="#fff" strokeWidth="1.200"><path d="M5 3.500H15V10.500H5ZM15.500 5.500V8.500M1 1V4H5V1M3 4V8H5" /></svg></TaskCell>
        <TaskCell $w={9}><svg width="13" height="13" viewBox="0 0 13 13" fill="none" stroke="#ddd" strokeWidth="1.200"><path d="M1 12Q1 1 12 1M4 12Q4 4 12 4M7 12Q7 7 12 7" /><circle cx="11" cy="11" r="1.300" fill="#fff" /></svg></TaskCell>
        <TaskCell $w={35}><svg width="14" height="14" viewBox="0 0 14 14"><circle cx="7" cy="7" r="6.800" fill="#888" /><path d="M4.300 4.300L9.700 9.700M9.700 4.300L4.300 9.700" stroke="#000" strokeWidth="1.600" /></svg></TaskCell>
        <TaskCell $w={24}><svg width="14" height="14" viewBox="0 0 14 14"><rect width="14" height="14" fill="#fff" /><path d="M4 3H3.500V5.500H10.500V9Q10.500 11 8 11" fill="none" stroke="#000" strokeWidth="1.200" /></svg></TaskCell>
        <TaskCell $w={5} />
        <Clock>下午 08:35<br />2018/5/14</Clock>
        <Notice>
          <svg width="16" height="16" viewBox="0 0 16 16"><path d="M0 0H16V11H9L6 14V11H0Z" fill="#fff" /><path d="M2 3H14M2 5.500H14M2 8H9" stroke="#000" /></svg>
          <Badge>21</Badge>
        </Notice>
      </TaskBar>
    </Screen>
  );
}
